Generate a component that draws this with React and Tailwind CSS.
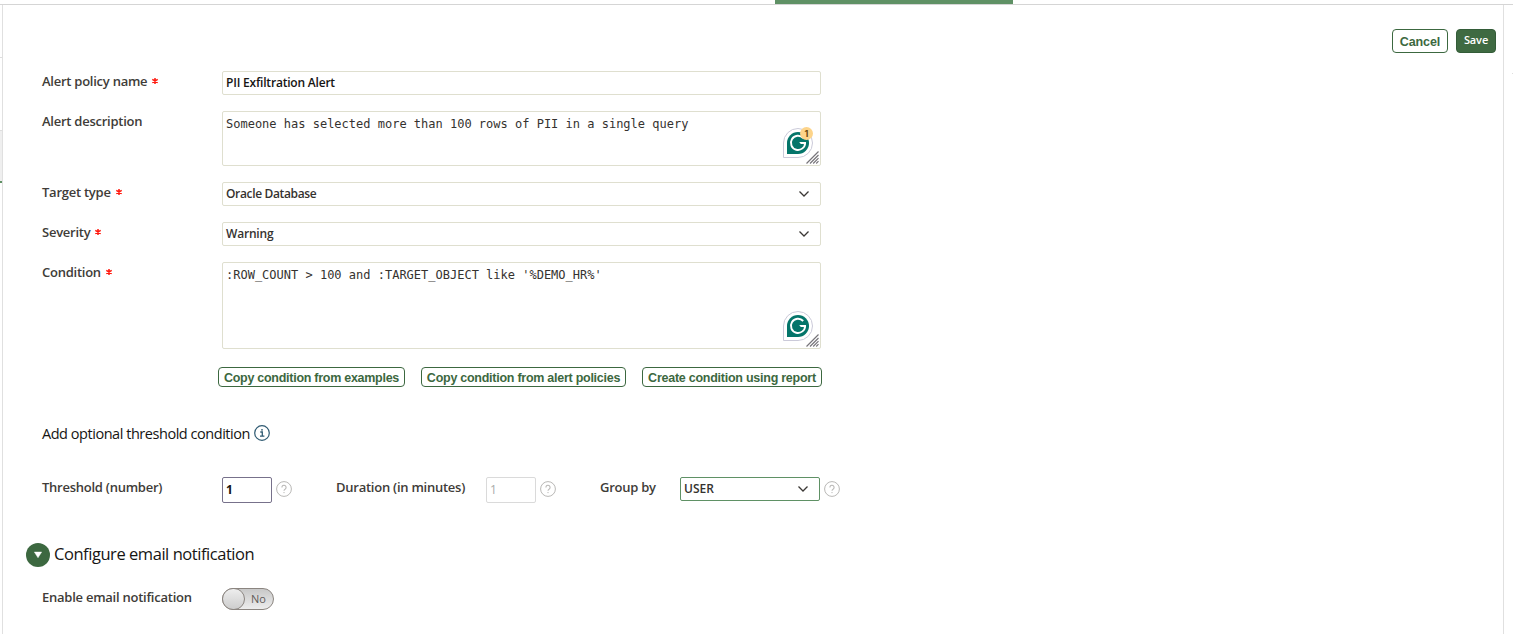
import React from "react";

function Label({ children, required, className = "" }) {
  return (
    <div className={`flex h-5 shrink-0 items-center whitespace-nowrap text-[13px] leading-5 font-semibold text-[#403c38] ${className}`}>
      <span className="tracking-[-0.25px]">{children}</span>
      {required && (
        <svg viewBox="0 0 6 6" className="ml-[5px] h-1.5 w-1.5 overflow-visible" stroke="#ff1a10" strokeWidth="1.5">
          <path d="M3 0v6M0.3 1.4l5.4 3.2M5.7 1.4l-5.4 3.2" />
        </svg>
      )}
    </div>
  );
}

function Chevron() {
  return (
    <svg viewBox="0 0 12 8" className="h-2 w-3" fill="none" stroke="#3b3835" strokeWidth="1.3">
      <path d="M1.5 1.5 6 6l4.5-4.5" />
    </svg>
  );
}

function Select({ value, className = "" }) {
  return (
    <div className={`flex h-6 items-center justify-between rounded-[2px] border bg-white pl-[3px] text-[12px] font-semibold text-[#35322f] ${className}`}>
      <span>{value}</span>
      <Chevron />
    </div>
  );
}

function Grammar({ count }) {
  return (
    <div className="absolute right-[7px] bottom-[7px] h-[30px] w-[30px]">
      <svg viewBox="0 0 30 30" className="h-[30px] w-[30px]">
        <path d="M.5 29.5V15A14.5 14.5 0 1 1 15 29.5z" fill="#fff" stroke="#cbcad9" />
        <path d="M4 26V15A11 11 0 1 1 15 26z" fill="#04756a" />
        <path d="M20.2 10A7.1 7.1 0 1 0 22.1 14.6" fill="none" stroke="#fff" strokeWidth="1.9" />
        <path d="M16.2 13.9H23V16H17.8z" fill="#fff" />
      </svg>
      {count && (
        <span className="absolute -top-[1px] left-[17px] flex h-[13px] w-[13px] items-center justify-center rounded-full bg-[#fdd48a] font-['Inter',sans-serif] text-[9px] leading-none font-bold text-[#6b4a10]">
          {count}
        </span>
      )}
    </div>
  );
}

function TextArea({ children, count, className = "" }) {
  return (
    <div className={`relative w-[599px] rounded-[2px] border border-[#dfdfcf] pt-[5px] pl-[3px] font-['DejaVu_Sans_Mono',monospace] text-[12px] leading-[14px] text-[#35322f] ${className}`}>
      <span className="whitespace-pre">{children}</span>
      <Grammar count={count} />
      <svg viewBox="0 0 14 14" className="absolute right-[1px] bottom-[1px] h-3.5 w-3.5" stroke="#77757a" strokeWidth="1.15">
        <path d="M1.5 13.5 13.5 1.5M5 13.5l8.5-8.5M8.2 13.5l5.3-5.3M11.2 13.5l2.3-2.3" />
      </svg>
    </div>
  );
}

function Help() {
  return (
    <svg viewBox="0 0 16 16" className="mt-1 ml-1 h-4 w-4 shrink-0" fill="none" stroke="#b9b8b6">
      <circle cx="8" cy="8" r="7.4" />
      <path d="M5.9 6.4a2.1 2.1 0 1 1 3.3 1.7C8.4 8.6 8 8.8 8 9.7" strokeWidth="1.1" />
      <circle cx="8" cy="11.6" r=".7" fill="#b9b8b6" stroke="none" />
    </svg>
  );
}

function OutlineButton({ children, className = "" }) {
  return (
    <button className={`flex items-center justify-center rounded-[4px] border border-[#3c6840] bg-white font-['Liberation_Sans',sans-serif] font-bold whitespace-nowrap text-[#3c6840] ${className}`}>
      <span>{children}</span>
    </button>
  );
}

export default function App() {
  return (
    <div className="flex h-[634px] w-[1513px] flex-col overflow-hidden bg-white font-['Open_Sans',sans-serif]">
      <div className="flex h-[5px] shrink-0 border-b border-[#d5d5d5] pl-[775px]">
        <div className="h-1 w-[238px] bg-[#5f9165]" />
      </div>
      <div className="flex flex-1">
        <div className="flex w-[3px] shrink-0 flex-col border-r border-[#e0e0e0]">
          <div className="h-[53px] border-b border-[#dedede]" />
          <div className="h-[72px]" />
          <div className="h-[51px] border-t border-[#dedede] bg-[#efefef]" />
          <div className="h-[2px] bg-[#5f9165]" />
        </div>

        <div className="flex w-[1500px] shrink-0 flex-col">
          <div className="mt-6 flex h-6 justify-end gap-2 pr-[7px]">
            <OutlineButton className="w-[56px] pt-0.5 text-[12.5px] tracking-[-0.1px]">Cancel</OutlineButton>
            <button className="w-10 rounded-[4px] border border-[#335c38] bg-[#3f6a42] pb-0.5 text-[11px] leading-5 font-semibold tracking-[-0.1px] text-white">
              Save
            </button>
          </div>

          <div className="mt-[18px] flex flex-col gap-4 pl-[39px]">
            <div className="flex h-6">
              <Label required className="w-[180px]">Alert policy name</Label>
              <div className="flex w-[599px] items-center rounded-[2px] border border-[#dfdfcf] pl-[3px] text-[12px] font-semibold text-[#161513]">
                <span className="tracking-[-0.2px]">PII Exfiltration Alert</span>
              </div>
            </div>
            <div className="flex">
              <Label className="w-[180px]">Alert description</Label>
              <TextArea count="1" className="h-[55px]">Someone has selected more than 100 rows of PII in a single query</TextArea>
            </div>
            <div className="flex">
              <Label required className="w-[180px]">Target type</Label>
              <Select value="Oracle Database" className="w-[599px] border-[#dfdfcf] pr-[10px] tracking-[-0.35px]" />
            </div>
            <div className="flex">
              <Label required className="w-[180px]">Severity</Label>
              <Select value="Warning" className="w-[599px] border-[#dfdfcf] pr-[10px] tracking-[-0.2px]" />
            </div>
            <div className="flex">
              <Label required className="w-[180px]">Condition</Label>
              <TextArea className="h-[87px]">:ROW_COUNT &gt; 100 and :TARGET_OBJECT like '%DEMO_HR%'</TextArea>
            </div>
          </div>

          <div className="mt-[18px] flex h-5 gap-4 pl-[215px]">
            <OutlineButton className="w-[187px] pt-0.5 text-[12.5px] tracking-[-0.27px]">Copy condition from examples</OutlineButton>
            <OutlineButton className="w-[205px] pt-0.5 text-[12.5px] tracking-[-0.26px]">Copy condition from alert policies</OutlineButton>
            <OutlineButton className="w-[180px] pt-0.5 text-[12.5px] tracking-[-0.25px]">Create condition using report</OutlineButton>
          </div>

          <div className="mt-9 flex h-5 items-center pl-[39px] text-[14.5px] text-[#161513]">
            <div className="w-[212px] pt-0.5 whitespace-nowrap tracking-[-0.46px]"><span>Add optional threshold condition</span></div>
            <svg viewBox="0 0 16 16" className="h-4 w-4" fill="none" stroke="#2f5a72">
              <circle cx="8" cy="8" r="7.3" strokeWidth="1.2" />
              <path d="M6.3 7h2v4M6 11.2h4.4" strokeWidth="1.3" />
              <circle cx="8" cy="4.8" r=".9" fill="#2f5a72" stroke="none" />
            </svg>
          </div>

          <div className="mt-[34px] flex h-[26px] pl-[39px]">
            <Label className="w-[180px]">Threshold (number)</Label>
            <div className="flex w-[50px] items-center rounded-[2px] border border-[#77718b] pl-[3px] text-[12px] font-bold text-[#161513]">1</div>
            <Help />
            <Label className="ml-11 w-[150px]">Duration (in minutes)</Label>
            <div className="flex w-[50px] items-center rounded-[2px] border border-[#dadada] pl-[3px] text-[12px] font-medium text-[#aaa]">1</div>
            <Help />
            <Label className="ml-11 w-[80px]">Group by</Label>
            <Select value="USER" className="w-[140px] border-[#5f9165] pr-[10px]" />
            <Help />
          </div>

          <div className="mt-10 flex h-6 items-center pl-[23px]">
            <svg viewBox="0 0 24 24" className="h-6 w-6">
              <circle cx="12" cy="12" r="12" fill="#3c6840" />
              <path d="M8.3 9h7.4L12 14.8z" fill="#fff" stroke="#fff" strokeWidth=".4" />
            </svg>
            <span className="mb-0.5 ml-1 text-[16.5px] leading-6 tracking-[-0.45px] whitespace-nowrap text-[#161513]">Configure email notification</span>
          </div>

          <div className="mt-5 flex pl-[39px]">
            <Label className="w-[180px]">Enable email notification</Label>
            <div className="mt-px flex h-[22px] w-[52px] items-center rounded-full border border-[#8b8580] bg-linear-to-b from-[#c8c8c8] to-[#ededed]">
              <div className="-ml-px h-[22px] w-[23px] shrink-0 rounded-full border border-[#8b8580] bg-linear-to-b from-[#eee] to-[#cdcdcd]" />
              <span className="ml-1.5 text-[11px] text-[#5f5b58]">No</span>
            </div>
          </div>
        </div>

        <div className="flex flex-1 justify-end border-l border-[#e0e0e0]">
          <div className="mt-[68px] h-px w-px bg-[#dedede]" />
        </div>
      </div>
    </div>
  );
}
